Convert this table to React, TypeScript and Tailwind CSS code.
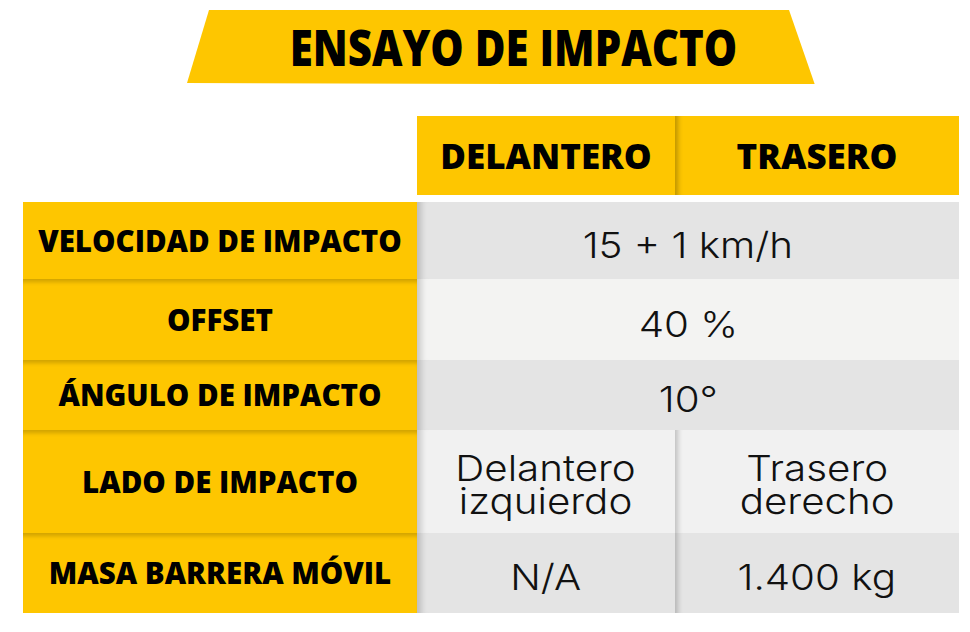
import React from "react";

const label = "font-['Open_Sans',sans-serif] font-extrabold text-black text-[29.5px] leading-none";
const val = "inline-block scale-x-[1.12] font-['Inter',sans-serif] font-light text-[#111] text-[36px] leading-[33px]";

export default function App() {
  return (
    <div className="w-[970px] h-[632px] bg-white overflow-hidden">
      <div className="pt-[10px] pl-[187px]">
        <div
          className="w-[628px] h-[74px] bg-[#fec600] flex items-center justify-center pl-[24px]"
          style={{ clipPath: "polygon(22px 0, 602px 0, 628px 75px, 0 73px)" }}
        >
          <span className="inline-block scale-x-[0.84] font-['Open_Sans',sans-serif] font-extrabold text-[50px] leading-none text-black whitespace-nowrap">
            ENSAYO DE IMPACTO
          </span>
        </div>
      </div>

      <div className="ml-[23px] mt-[32px] w-[936px] grid grid-cols-[394px_258px_284px]">
        <div className="h-[79px]" />
        <div className="h-[79px] bg-[#fec600] flex items-center justify-center">
          <span className="font-['Open_Sans',sans-serif] font-extrabold text-[35px] leading-none">DELANTERO</span>
        </div>
        <div className="h-[79px] bg-[#fec600] flex items-center justify-center shadow-[inset_8px_0_5px_-5px_rgba(0,0,0,0.25)]">
          <span className="font-['Open_Sans',sans-serif] font-extrabold text-[35px] leading-none">TRASERO</span>
        </div>

        <div className="col-span-3 h-[7px]" />

        {/* Row 1 */}
        <div className="h-[77px] bg-[#fec600] flex items-center justify-center">
          <span className={label}>VELOCIDAD DE IMPACTO</span>
        </div>
        <div className="col-span-2 h-[77px] bg-[#e4e4e4] flex items-center justify-center pt-[9px] shadow-[inset_10px_0_6px_-6px_rgba(0,0,0,0.18)]">
          <span className={val}>15 + 1 km/h</span>
        </div>

        {/* Row 2 */}
        <div className="h-[81px] bg-[#fec600] flex items-center justify-center shadow-[inset_0_6px_4px_-3px_rgba(0,0,0,0.18)]">
          <span className={label}>OFFSET</span>
        </div>
        <div className="col-span-2 h-[81px] bg-[#f3f3f2] flex items-center justify-center pt-[9px] shadow-[inset_10px_0_6px_-6px_rgba(0,0,0,0.18)]">
          <span className={val}>40 %</span>
        </div>

        {/* Row 3 */}
        <div className="h-[70px] bg-[#fec600] flex items-center justify-center shadow-[inset_0_6px_4px_-3px_rgba(0,0,0,0.18)]">
          <span className={label}>ÁNGULO DE IMPACTO</span>
        </div>
        <div className="col-span-2 h-[70px] bg-[#e4e4e4] flex items-center justify-center pt-[9px] shadow-[inset_10px_0_6px_-6px_rgba(0,0,0,0.18)]">
          <span className={val}>10°</span>
        </div>

        {/* Row 4 */}
        <div className="h-[103px] bg-[#fec600] flex items-center justify-center shadow-[inset_0_6px_4px_-3px_rgba(0,0,0,0.18)]">
          <span className={label}>LADO DE IMPACTO</span>
        </div>
        <div className="h-[103px] bg-[#f1f1f1] flex items-center justify-center text-center pt-[6px] shadow-[inset_10px_0_6px_-6px_rgba(0,0,0,0.18)]">
          <span className={val}>Delantero<br />izquierdo</span>
        </div>
        <div className="h-[103px] bg-[#f1f1f1] flex items-center justify-center text-center pt-[6px] shadow-[inset_8px_0_5px_-5px_rgba(0,0,0,0.2)]">
          <span className={val}>Trasero<br />derecho</span>
        </div>

        {/* Row 5 */}
        <div className="h-[80px] bg-[#fec600] flex items-center justify-center shadow-[inset_0_6px_4px_-3px_rgba(0,0,0,0.18)]">
          <span className={label}>MASA BARRERA MÓVIL</span>
        </div>
        <div className="h-[80px] bg-[#e4e4e4] flex items-center justify-center pt-[9px] shadow-[inset_10px_0_6px_-6px_rgba(0,0,0,0.18)]">
          <span className={val}>N/A</span>
        </div>
        <div className="h-[80px] bg-[#e4e4e4] flex items-center justify-center pt-[9px] shadow-[inset_8px_0_5px_-5px_rgba(0,0,0,0.2)]">
          <span className={val}>1.400 kg</span>
        </div>
      </div>
    </div>
  );
}
